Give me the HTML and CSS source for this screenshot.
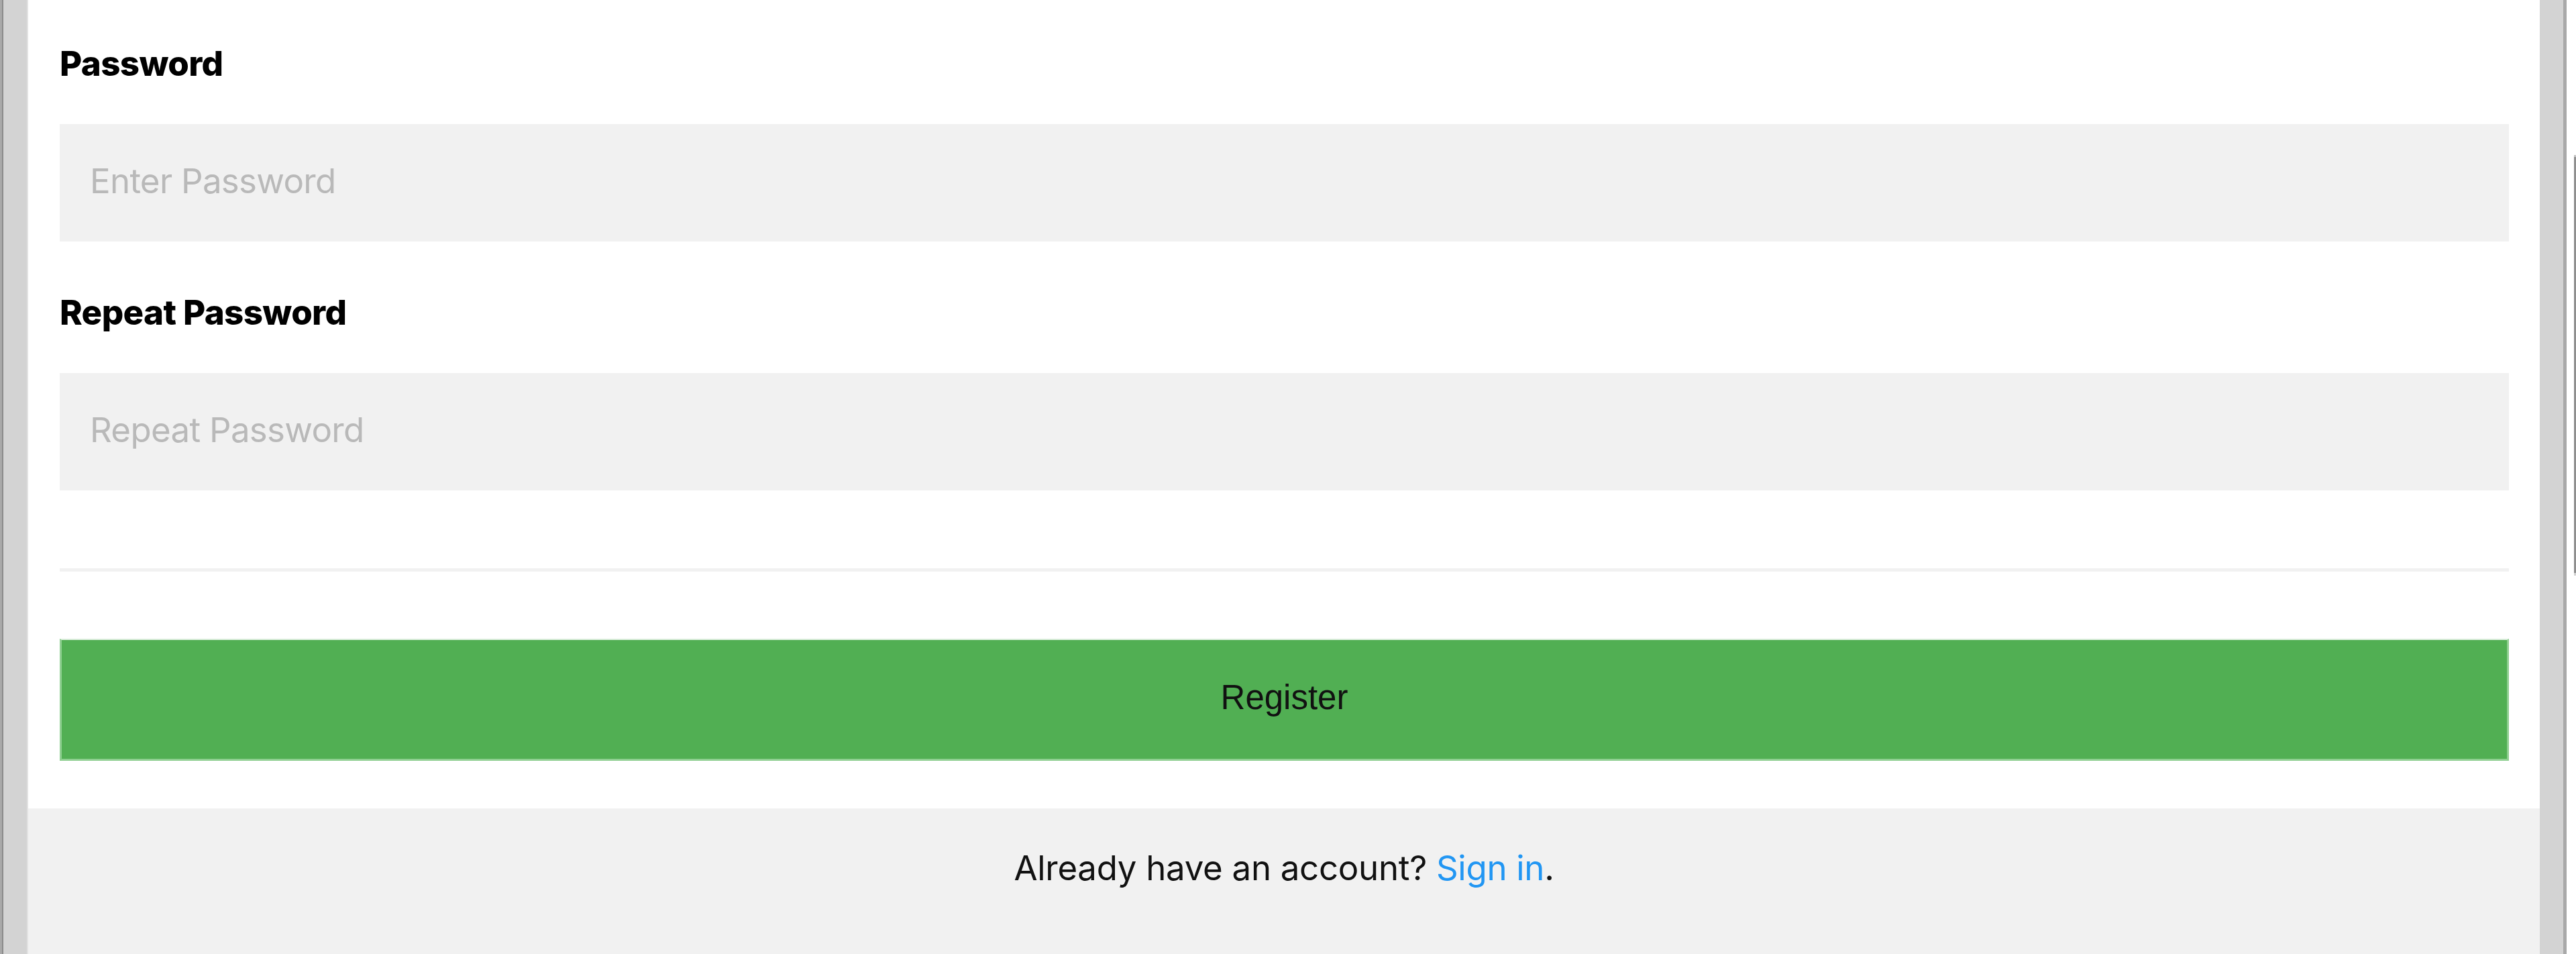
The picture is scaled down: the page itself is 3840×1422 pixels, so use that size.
FILE: index.html
```html
<!DOCTYPE html>
<html lang="en">
<head>
<meta charset="utf-8">
<title>Register</title>
<link rel="stylesheet" href="styles.css">
</head>
<body>
<div class="frame">
  <div class="edge-left"></div>
  <div class="modal">
    <form class="container">
      <label class="label" for="psw">Password</label>
      <input class="field" type="password" id="psw" placeholder="Enter Password">
      <label class="label label-2" for="psw-repeat">Repeat Password</label>
      <input class="field" type="password" id="psw-repeat" placeholder="Repeat Password">
      <hr class="divider">
      <button type="submit" class="registerbtn">Register</button>
    </form>
    <div class="signin">
      <p class="signin-text">Already have an account? <a class="signin-link" href="#">Sign in</a>.</p>
    </div>
  </div>
  <div class="edge-right"></div>
  <div class="gutter"><div class="thumb"></div></div>
</div>
</body>
</html>
```
FILE: styles.css
```css
html, body {
  margin: 0;
  padding: 0;
  background: #ffffff;
}

body {
  font-family: "Inter", "Open Sans", sans-serif;
  color: #000;
}

.frame {
  display: flex;
  height: 1422px;
  overflow: hidden;
}

.edge-left {
  width: 42px;
  flex: none;
  background: linear-gradient(to right, #a9a9a9 0 3px, #8a8a8a 3px 5px, #d3d3d3 5px 40px, #e2e2e2 40px 42px);
}

.modal {
  flex: 1;
  display: flex;
  flex-direction: column;
  background: #ffffff;
}

.container {
  display: flex;
  flex-direction: column;
  padding: 56px 46px 0 47px;
}

.label {
  display: block;
  font-size: 51px;
  line-height: 77px;
  font-weight: 800;
  letter-spacing: -0.6px;
  color: #000;
}

.label-2 {
  margin-top: 67px;
}

.field {
  box-sizing: border-box;
  display: block;
  width: 100%;
  height: 175px;
  margin: 52px 0 0;
  padding: 46px 45px 52px;
  border: none;
  background: #f1f1f1;
  font-family: "Inter", "Open Sans", sans-serif;
  font-size: 51px;
  line-height: 77px;
  letter-spacing: -0.7px;
  color: #000;
  outline: none;
}

.field::placeholder {
  color: #b9b9b9;
  opacity: 1;
}

.divider {
  margin: 116px 0 0;
  height: 5px;
  border: none;
  background: #f1f1f1;
}

.registerbtn {
  box-sizing: border-box;
  display: block;
  width: 100%;
  height: 182px;
  margin-top: 100px;
  padding: 0 0 6px;
  border: none;
  border-top: 2px solid #e0efe0;
  border-left: 3px solid #8fcf91;
  border-right: 3px solid #8fcf91;
  border-bottom: 3px solid #8fcf91;
  background: #51af53;
  font-family: "Liberation Sans", Arial, sans-serif;
  font-size: 51px;
  color: #111;
  cursor: pointer;
}

.signin {
  flex: 1;
  margin-top: 71px;
  padding-top: 50px;
  background: #f1f1f1;
  text-align: center;
}

.signin-text {
  margin: 0;
  font-size: 51px;
  line-height: 77px;
  letter-spacing: -0.3px;
  color: #111;
}

.signin-link {
  color: #2196f3;
  text-decoration: none;
}

.edge-right {
  width: 40px;
  flex: none;
  background: linear-gradient(to right, #d3d3d3 0 35px, #a9a9a9 35px 40px);
}

.gutter {
  flex: none;
  width: 14px;
  padding-top: 231px;
  box-sizing: border-box;
}

.thumb {
  margin-left: 11px;
  width: 3px;
  height: 627px;
  background: #8e8e8e;
  border-top: 3px solid #c6c6c6;
  border-bottom: 4px solid #d2d2d2;
  box-sizing: border-box;
}
```
